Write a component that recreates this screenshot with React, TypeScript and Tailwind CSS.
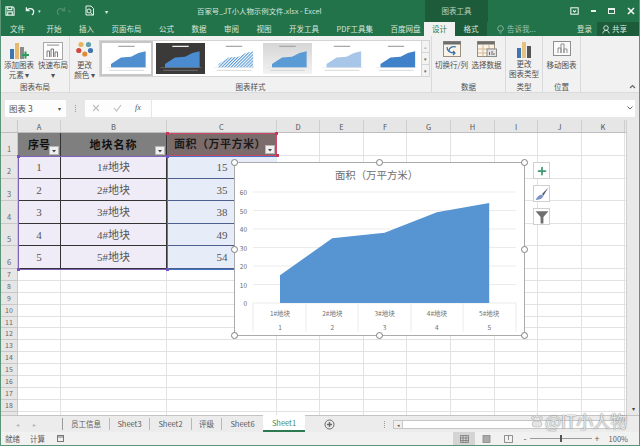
import { Plus } from "lucide-react";

const ui = "font-['Noto_Sans_CJK_SC','Noto_Sans',sans-serif]";
const cellFont = "font-['Liberation_Serif','Noto_Sans_CJK_SC',serif]";

const tabs = ["开始", "插入", "页面布局", "公式", "数据", "审阅", "视图", "开发工具", "PDF工具集", "百度网盘"];
const colWidths = [43, 106, 110, 43, 44, 43, 44, 44, 43, 44, 43, 44];
const colNames = ["A", "B", "C", "D", "E", "F", "G", "H", "I", "J", "K", ""];
const rows = [
  ["1", "1#地块", "15"],
  ["2", "2#地块", "35"],
  ["3", "3#地块", "38"],
  ["4", "4#地块", "49"],
  ["5", "5#地块", "54"],
];
const emptyRows = [7, 8, 9, 10, 11, 12, 13, 14, 15, 16, 17, 18, 19];
const values = [15, 35, 38, 49, 54];

// tiny area chart for the style gallery
function Thumb({ fill, dark, hatch }: { fill: string; dark?: boolean; hatch?: boolean }) {
  return (
    <svg viewBox="0 0 50 34" className="w-full h-full">
      {hatch && (
        <pattern id="hatch" width="2.4" height="2.4" patternUnits="userSpaceOnUse" patternTransform="rotate(45)">
          <rect width="1.2" height="2.4" fill="#5b9bd5" />
        </pattern>
      )}
      <rect x="16" y="3" width="18" height="1.4" fill={dark ? "#eeeeee" : "#a8a8a8"} />
      <path d="M8 27 V23 L19 16 L30 15 L38 11 L46 9 V27 Z" fill={hatch ? "url(#hatch)" : fill} />
      <rect x="3" y="27" width="45" height="0.4" fill={dark ? "#999999" : "#d8d8d8"} />
      <rect x="6" y="29.5" width="38" height="0.7" fill={dark ? "#888888" : "#c4c4c4"} />
    </svg>
  );
}

function Filter() {
  return (
    <span className="absolute right-[1px] bottom-[1px] w-[10px] h-[9px] bg-[#f0f0f0] border border-[#b5b5b5] flex items-center justify-center">
      <svg width="6" height="4" viewBox="0 0 6 4"><path d="M1 1 H5 L3 3.4 Z" fill="#444444" /></svg>
    </span>
  );
}

function Handle({ className }: { className: string }) {
  return <span className={`absolute w-[7px] h-[7px] rounded-full bg-white border border-[#7f7f7f] ${className}`} />;
}

function Corner({ className }: { className: string }) {
  return <span className={`absolute w-[3px] h-[3px] ${className}`} />;
}

function AreaChart() {
  const pts = values.map((v, i) => `${45 + i * 52.3},${140 - v * 1.85}`).join(" L");
  return (
    <svg viewBox="0 0 289 172" className="w-full h-full">
      <text x="141.5" y="16" textAnchor="middle" fontSize="10.4" fill="#6e6e6e" className={ui}>面积（万平方米）</text>
      {[60, 50, 40, 30, 20, 10, 0].map((t, i) => (
        <g key={t}>
          <line x1="18" x2="281" y1={29 + i * 18.5} y2={29 + i * 18.5} stroke="#e6e6e6" strokeWidth="0.8" />
          <text x="12" y={32 + i * 18.5} textAnchor="end" fontSize="6.5" fill="#6a6a6a" className={ui}>{t}</text>
        </g>
      ))}
      <path d={`M45,140 L${pts} L254.2,140 Z`} fill="#5694d2" />
      {[18, 71, 123, 176, 228, 281].map((x) => (
        <line key={x} x1={x} x2={x} y1="140" y2="169" stroke="#e6e6e6" strokeWidth="0.8" />
      ))}
      {values.map((_, i) => (
        <g key={i}>
          <text x={45 + i * 52.3} y="153" textAnchor="middle" fontSize="6.5" fill="#707070" className={ui}>{i + 1}#地块</text>
          <text x={45 + i * 52.3} y="167" textAnchor="middle" fontSize="6.5" fill="#707070" className={ui}>{i + 1}</text>
        </g>
      ))}
    </svg>
  );
}

export default function App() {
  return (
    <div className={`${ui} w-[640px] h-[446px] overflow-hidden relative flex flex-col bg-[#e9e9e9] text-[#444444] border-x border-b border-[#5b9478]`}>
      {/* title bar */}
      <div className="h-[22px] shrink-0 bg-[#22724a] text-[#d5e6dc] flex items-center relative">
        <div className="flex items-center pl-[4px] gap-[10px]">
          <svg width="10" height="10" viewBox="0 0 11 11" fill="none" stroke="#e8f2ec" strokeWidth="1.2">
            <path d="M1 1 H8.5 L10 2.5 V10 H1 Z M3 1 V4 H7.5 V1 M3 10 V6.5 H8 V10" />
          </svg>
          <svg width="11" height="10" viewBox="0 0 12 10" fill="none" stroke="#e8f2ec" strokeWidth="1.4">
            <path d="M1.5 1 V4.5 H5 M1.8 4.3 C3.5 1.5 9 1.5 9.5 5.5 C9.6 7 9 8.5 7.5 9.2" />
          </svg>
          <span className="text-[5px] -ml-[8px] -mt-[1px]">▾</span>
          <svg width="11" height="10" viewBox="0 0 12 10" fill="none" stroke="#4f8c6c" strokeWidth="1.4" className="ml-[4px]">
            <path d="M10.5 1 V4.5 H7 M10.2 4.3 C8.5 1.5 3 1.5 2.5 5.5 C2.4 7 3 8.5 4.5 9.2" />
          </svg>
          <span className="text-[5px] -ml-[8px] text-[#4f8c6c]">▾</span>
          <svg width="11" height="12" viewBox="0 0 11 12" fill="none" stroke="#e8f2ec" strokeWidth="1" className="ml-[3px]">
            <path d="M2 10 V1 H7 L9.5 3.5 V10 H2 Z" />
            <circle cx="5" cy="6" r="2" />
            <path d="M6.5 7.5 L9 10.5" />
          </svg>
          <span className="text-[6px] text-[#e8f2ec]">▾</span>
        </div>
        <span className="absolute left-[196px] top-[4px] text-[7.4px] leading-[13px] whitespace-nowrap">百家号_JT小人物示例文件.xlsx - Excel</span>
        <div className="absolute left-[424px] top-0 w-[63px] h-[22px] bg-[#1d5c3b] flex items-center justify-center text-[7.5px] text-[#b8d2c2]">图表工具</div>
        <div className="ml-auto flex items-center gap-[12px] pr-[4px]">
          <svg width="9" height="8" viewBox="0 0 9 8" fill="none" stroke="#e8f2ec" strokeWidth="1.1"><rect x="0.8" y="0.8" width="7.4" height="6.4" /><path d="M3 3.5 L4.5 5 L6 3.5" /></svg>
          <span className="w-[5px] h-[1.5px] bg-[#e8f2ec]" />
          <span className="w-[7px] h-[6px] border border-t-2 border-[#e8f2ec]" />
          <svg width="8" height="8" viewBox="0 0 8 8" stroke="#f2f7f4" strokeWidth="1.6"><path d="M1 1 L7 7 M7 1 L1 7" /></svg>
        </div>
      </div>

      {/* ribbon tabs */}
      <div className="h-[14px] shrink-0 bg-[#22724a] text-[#d8e8de] text-[7.5px] leading-[14px] flex relative whitespace-nowrap">
        <div className="flex gap-[17.5px] pl-[9px]">
          <span className="mr-[4px]">文件</span>
          {tabs.map((t) => <span key={t}>{t}</span>)}
        </div>
        <div className="absolute left-[423px] top-0 w-[31px] h-[14px] bg-[#f1f1f1] text-[#2d7a52] text-center">设计</div>
        <div className="absolute left-[454px] top-0 w-[32px] h-[14px] bg-[#1d5c3b] text-center">格式</div>
        <div className="absolute left-[496px] top-0 text-[#9fc2ae] flex items-center gap-[3px]">
          <svg width="7" height="9" viewBox="0 0 7 9" fill="none" stroke="#9fc2ae" strokeWidth="0.9"><path d="M2 6 C0 4.5 0.5 0.7 3.5 0.7 C6.5 0.7 7 4.5 5 6 Z M2.5 8 H4.5" /></svg>
          告诉我...
        </div>
        <div className="absolute left-[576px] top-0">登录</div>
        <div className="absolute left-[596px] top-0 w-[42px] h-[14px] bg-[#1d5c3b] pl-[5px] flex items-center gap-[2px]">
          <svg width="8" height="9" viewBox="0 0 8 9" fill="none" stroke="#d8e8de" strokeWidth="0.9"><circle cx="4" cy="3" r="2.3" /><path d="M0.8 8.5 C1.2 6.2 2.5 5.4 4 5.4 C5.5 5.4 6.8 6.2 7.2 8.5" /></svg>
          共享
        </div>
      </div>

      {/* ribbon */}
      <div className="h-[57px] shrink-0 bg-[#f1f1f1] flex text-[7.5px] leading-[9.5px] text-[#505050] border-b border-[#dcdcdc]">
        <div className="w-[69px] shrink-0 border-r border-[#dadada] flex flex-col">
          <div className="flex-1 flex pl-[3px] pt-[6px] gap-[4px]">
            <div className="w-[30px] flex flex-col items-center text-center">
              <svg width="20" height="18" viewBox="0 0 20 18">
                <rect x="1" y="7" width="4" height="10" fill="#3f76ad" />
                <rect x="6" y="1" width="4" height="16" fill="#e6b96f" />
                <rect x="11" y="5" width="4" height="12" fill="#8a8a8a" />
                <path d="M13 13 H20 M16.5 9.5 V16.5" stroke="#2f9a5e" strokeWidth="2" />
              </svg>
              <span>添加图表<br />元素 ▾</span>
            </div>
            <div className="w-[30px] flex flex-col items-center text-center">
              <svg width="20" height="18" viewBox="0 0 20 18" fill="none">
                <rect x="0.5" y="0.5" width="19" height="17" stroke="#a8a8a8" fill="#fdfdfd" />
                <rect x="4" y="2.5" width="12" height="1.2" fill="#a0a0a0" />
                <path d="M4 15 V9 H6.5 V15 M8 15 V7 H10.5 V15 M12 15 V10 H14.5 V15" stroke="#7a7a7a" />
              </svg>
              <span>快速布局<br />▾</span>
            </div>
          </div>
          <span className="text-center pb-[1px]">图表布局</span>
        </div>
        <div className="w-[362px] shrink-0 border-r border-[#dadada] flex flex-col">
          <div className="flex-1 flex pt-[4px]">
            <div className="w-[29px] shrink-0 flex flex-col items-center text-center pt-[1px]">
              <svg width="18" height="18" viewBox="0 0 18 18">
                <circle cx="5" cy="3.5" r="2.6" fill="#e8b45f" />
                <circle cx="12.5" cy="3.5" r="2.6" fill="#5fa3a8" />
                <circle cx="2.8" cy="9.5" r="2.6" fill="#d2483c" />
                <circle cx="14.5" cy="9.5" r="2.6" fill="#3f76ad" />
                <circle cx="8.8" cy="13" r="2.6" fill="#e08a38" />
              </svg>
              <span className="mt-[1px]">更改<br />颜色 ▾</span>
            </div>
            <div className="w-[331px] h-[37px] border border-[#d4d4d4] bg-white flex items-center">
              <div className="w-[53px] h-[35px] border-2 border-[#c6c6c6] shrink-0"><Thumb fill="#4f8fcf" /></div>
              <div className="w-[49px] h-[31px] ml-[3px] bg-[#3b3a39] shrink-0"><Thumb fill="#4a8ccf" dark /></div>
              <div className="w-[50px] h-[31px] ml-[4px] shrink-0"><Thumb fill="#5b9bd5" hatch /></div>
              <div className="w-[49px] h-[31px] ml-[4px] bg-gradient-to-b from-[#d6d6d6] to-[#f2f2f2] shrink-0"><Thumb fill="#5b9bd5" /></div>
              <div className="w-[50px] h-[31px] ml-[5px] shrink-0"><Thumb fill="#a8c6e8" /></div>
              <div className="w-[50px] h-[31px] ml-[4px] shrink-0"><Thumb fill="#3f82c9" /></div>
              <div className="ml-auto w-[10px] h-full border-l border-[#d4d4d4] flex flex-col text-[5px] leading-none text-[#666666] bg-[#f3f3f3]">
                <span className="flex-1 flex items-center justify-center border-b border-[#d4d4d4] text-[#bbbbbb]">▴</span>
                <span className="flex-1 flex items-center justify-center border-b border-[#d4d4d4]">▾</span>
                <span className="flex-1 flex items-center justify-center">▾</span>
              </div>
            </div>
          </div>
          <span className="text-center pb-[1px]">图表样式</span>
        </div>
        <div className="w-[74px] shrink-0 border-r border-[#dadada] flex flex-col">
          <div className="flex-1 flex pt-[5px] pl-[2px] text-center whitespace-nowrap">
            <div className="w-[35px] flex flex-col items-center">
              <svg width="18" height="16" viewBox="0 0 18 16" fill="none">
                <rect x="0.5" y="0.5" width="17" height="15" fill="#fbf3e6" stroke="#9a8f80" />
                <rect x="0.5" y="0.5" width="17" height="3" fill="#6d6d6d" />
                <path d="M4 6 C4 11 8 12 12 12 M10 10 L12 12 L10 14 M6 10 C6 6 10 5 13 6" stroke="#2f6fb0" strokeWidth="1.2" />
              </svg>
              <span className="mt-[3px] -mx-[2px]">切换行/列</span>
            </div>
            <div className="w-[35px] flex flex-col items-center">
              <svg width="20" height="16" viewBox="0 0 20 16" fill="none">
                <rect x="0.5" y="0.5" width="17" height="15" fill="#fbf3e6" stroke="#9a8f80" />
                <rect x="0.5" y="0.5" width="17" height="3" fill="#6d6d6d" />
                <path d="M6 4 V15 M12 4 V15 M1 8 H17 M1 12 H17" stroke="#d3b79a" />
                <rect x="10" y="8" width="9.5" height="7.5" fill="#e4e4e4" stroke="#8a8a8a" />
                <path d="M12.5 14 V11 M15 14 V10 M17 14 V12" stroke="#6a6a6a" />
              </svg>
              <span className="mt-[3px] -mx-[2px]">选择数据</span>
            </div>
          </div>
          <span className="text-center pb-[1px]">数据</span>
        </div>
        <div className="w-[37px] shrink-0 border-r border-[#dadada] flex flex-col items-center text-center">
          <div className="flex-1 pt-[5px] flex flex-col items-center">
            <svg width="16" height="17" viewBox="0 0 16 17">
              <rect x="1" y="7" width="4" height="10" fill="#3f76ad" />
              <rect x="6" y="1" width="4" height="16" fill="#e6c282" />
              <rect x="11" y="5" width="4" height="12" fill="#555555" />
            </svg>
            <span className="mt-[1px] whitespace-nowrap">更改<br />图表类型</span>
          </div>
          <span className="pb-[1px]">类型</span>
        </div>
        <div className="w-[38px] shrink-0 border-r border-[#dadada] flex flex-col items-center text-center">
          <div className="flex-1 pt-[5px] flex flex-col items-center whitespace-nowrap">
            <svg width="18" height="16" viewBox="0 0 18 16" fill="none" stroke="#8f8f8f">
              <rect x="0.5" y="0.5" width="17" height="14" fill="#fafafa" />
              <path d="M5 12 V7 H8 V12 M8 12 V3 H11 V12 M11 12 V8 H14 V12" />
            </svg>
            <span className="mt-[3px]">移动图表</span>
          </div>
          <span className="pb-[1px]">位置</span>
        </div>
        <div className="flex-1 flex items-end justify-end pr-[3px] pb-[3px] text-[#666666]">
          <svg width="7" height="5" viewBox="0 0 7 5" fill="none" stroke="#666666" strokeWidth="1.2"><path d="M1 4 L3.5 1.5 L6 4" /></svg>
        </div>
      </div>

      {/* formula bar */}
      <div className="h-[27px] shrink-0 bg-[#e7e7e7] flex items-center pt-[3px] pl-[4px] pr-[4px]">
        <div className="w-[61px] h-[17px] bg-[#fdfdfd] flex items-center justify-between pl-[4px] pr-[5px] text-[8.5px] text-[#555555]">
          <span>图表 3</span>
          <span className="text-[6px]">▾</span>
        </div>
        <span className="w-[1px] h-[7px] mx-[9px] border-l border-dotted border-[#999999]" />
        <div className="w-[66px] h-[17px] bg-[#fdfdfd] flex items-center gap-[13px] pl-[7px]">
          <svg width="8" height="8" viewBox="0 0 8 8" stroke="#bdbdbd" strokeWidth="1.1"><path d="M1 1 L7 7 M7 1 L1 7" /></svg>
          <svg width="9" height="8" viewBox="0 0 9 8" stroke="#bdbdbd" strokeWidth="1.1" fill="none"><path d="M1 4 L3.5 7 L8 1" /></svg>
          <span className="font-['Liberation_Serif',serif] italic text-[8px] text-[#555555]">fx</span>
        </div>
        <div className="flex-1 h-[17px] ml-[1px] bg-white flex items-center justify-end pr-[2px]">
          <svg width="6" height="4" viewBox="0 0 6 4" fill="none" stroke="#666666"><path d="M0.5 0.5 L3 3 L5.5 0.5" /></svg>
        </div>
      </div>

      {/* sheet */}
      <div className="flex-1 min-h-0 flex bg-white relative">
        <div className="flex-1 min-w-0 overflow-hidden">
          <div className="flex h-[13px] bg-[#e6e6e6] text-[7.5px] leading-[13px] text-[#555555] border-b border-[#bdbdbd]">
            <div className="w-[17px] shrink-0 border-r border-[#c8c8c8]" />
            {colWidths.map((w, i) => (
              <div key={i} style={{ width: w }} className="shrink-0 text-center border-r border-[#cfcfcf]">{colNames[i]}</div>
            ))}
          </div>
          {/* header row */}
          <div className="flex h-[23px]">
            <RowHead n={1} />
            <div className={`${cellFont} relative w-[43px] shrink-0 bg-[#7f7f7f] border-r border-[#333333] font-bold text-[11px] leading-[24px] text-center text-[#111111]`}>序号<Filter /></div>
            <div className={`${cellFont} relative w-[106px] shrink-0 bg-[#7f7f7f] border-r border-[#333333] font-bold text-[11px] leading-[24px] text-center text-[#111111] tracking-[1px]`}>地块名称<Filter /></div>
            <div className={`${cellFont} relative w-[110px] shrink-0 bg-[#7b6b6b] border-[1.5px] border-[#cf4a66] font-bold text-[11px] leading-[21px] pl-[6px] text-[#1b1b1b] whitespace-nowrap tracking-[0.5px]`}>面积（万平方米）<Filter /></div>
            <EmptyCells />
          </div>
          {rows.map((r, i) => (
            <div key={r[0]} className="flex h-[22.6px]">
              <RowHead n={i + 2} />
              <div className={`${cellFont} w-[43px] shrink-0 bg-[#efecf7] border-r border-b border-[#333333] text-[11px] leading-[22px] text-center text-[#555555]`}>{r[0]}</div>
              <div className={`${cellFont} w-[106px] shrink-0 bg-[#efecf7] border-r border-b border-[#333333] text-[11px] leading-[22px] text-center text-[#555555]`}>{r[1]}</div>
              <div className={`${cellFont} w-[110px] shrink-0 bg-[#e6edf8] border-b border-[#4e5e8c] text-[11px] leading-[22px] text-center text-[#555555]`}>{r[2]}</div>
              <EmptyCells />
            </div>
          ))}
          {emptyRows.map((n) => (
            <div key={n} className="flex h-[11.9px]">
              <div className="w-[17px] shrink-0 bg-[#e6e6e6] border-r border-b border-[#c8c8c8] text-[7px] leading-[11px] text-center text-[#666666]">{n}</div>
              {colWidths.map((w, i) => <div key={i} style={{ width: w }} className="shrink-0 border-r border-b border-[#e2e2e2]" />)}
            </div>
          ))}
        </div>
        <div className="w-[13px] shrink-0 bg-[#e9e9e9] border-l border-[#d0d0d0] flex flex-col justify-end items-center pb-[2px] text-[6px]">▾</div>

        {/* range outlines */}
        <div className="absolute left-[17px] top-[36px] w-[150px] h-[114px] border-[1.5px] border-[#8061c0] pointer-events-none">
          <Corner className="-left-[2px] -top-[2px] bg-[#7a4fc0]" />
          <Corner className="-right-[2px] -top-[2px] bg-[#7a4fc0]" />
          <Corner className="-left-[2px] -bottom-[2px] bg-[#7a4fc0]" />
          <Corner className="-right-[2px] -bottom-[2px] bg-[#7a4fc0]" />
        </div>
        <div className="absolute left-[167px] top-[36px] w-[110px] h-[114px] border-y-[1.5px] border-[#4472c4] pointer-events-none" />
        <Corner className="left-[165px] top-[12px] bg-[#c8385a]" />
        <Corner className="left-[274px] top-[12px] bg-[#c8385a]" />
        <Corner className="left-[275px] top-[34px] bg-[#c8385a]" />

        {/* chart object */}
        <div className="absolute left-[233px] top-[42px] w-[291px] h-[174px] bg-white border border-[#ababab]">
          <AreaChart />
          <Handle className="-left-[4px] -top-[4px]" />
          <Handle className="left-[141px] -top-[4px]" />
          <Handle className="-right-[4px] -top-[4px]" />
          <Handle className="-left-[4px] top-[83px]" />
          <Handle className="-right-[4px] top-[83px]" />
          <Handle className="-left-[4px] -bottom-[4px]" />
          <Handle className="left-[141px] -bottom-[4px]" />
          <Handle className="-right-[4px] -bottom-[4px]" />
        </div>
        <div className="absolute left-[532px] top-[42px] flex flex-col gap-[6px]">
          <div className="w-[17px] h-[17px] bg-white border border-[#d0d0d0] flex items-center justify-center">
            <Plus size={12} strokeWidth={3.5} color="#3f9a72" />
          </div>
          <div className="w-[17px] h-[17px] bg-white border border-[#d0d0d0] flex items-center justify-center">
            <svg width="14" height="14" viewBox="0 0 12 12">
              <path d="M11.5 0.5 L6 6 L7.2 7.5 Z" fill="#4f5f72" />
              <path d="M0.5 11 C2 8 4 6.3 6 6.6 L7.2 8 C6 10.3 3.5 11.3 0.5 11 Z" fill="#7d93c8" />
            </svg>
          </div>
          <div className="w-[17px] h-[17px] bg-white border border-[#d0d0d0] flex items-center justify-center">
            <svg width="14" height="14" viewBox="0 0 12 12"><path d="M0.5 1 H11.5 L7.2 6 V11.5 H4.8 V6 Z" fill="#6e6e6e" /></svg>
          </div>
        </div>
      </div>

      {/* sheet tabs */}
      <div className="h-[17px] shrink-0 bg-[#ececec] border-t border-[#c4c4c4] flex items-center text-[7.5px] text-[#5a5a5a] relative whitespace-nowrap">
        <span className="absolute left-[15px] text-[6px] text-[#b5b5b5]">◂</span>
        <span className="absolute left-[32px] text-[6px] text-[#b5b5b5]">▸</span>
        <div className="flex items-center ml-[61px] h-[13px] text-center">
          <span className="w-[47px] border-l border-[#9a9a9a]">员工信息</span>
          <span className="w-[40px] border-l border-[#b8b8b8]">Sheet3</span>
          <span className="w-[42px] border-l border-[#b8b8b8]">Sheet2</span>
          <span className="w-[30px] border-l border-[#b8b8b8]">评级</span>
          <span className="w-[42px] border-l border-[#b8b8b8]">Sheet6</span>
        </div>
        <div className="h-[17px] w-[42px] -mt-[1px] bg-white border-b-2 border-[#2d7a52] text-[#3d8a62] text-center leading-[15px]">Sheet1</div>
        <svg width="11" height="11" viewBox="0 0 11 11" fill="none" stroke="#666666" className="ml-[19px]">
          <circle cx="5.5" cy="5.5" r="4.5" /><path d="M5.5 3 V8 M3 5.5 H8" strokeWidth="1.4" />
        </svg>
        <span className="h-[7px] ml-[49px] border-l border-dotted border-[#999999]" />
        <div className="ml-[8px] w-[233px] h-[9px] flex bg-white border border-[#c6c6c6]">
          <span className="w-[9px] bg-[#f0f0f0] border-r border-[#c6c6c6] text-[5px] leading-[7px] text-center">◂</span>
        </div>
      </div>

      {/* status bar */}
      <div className="flex-none h-[13px] bg-[#f1f1f1] flex items-center text-[7.5px] text-[#5f5f5f] pl-[4px]">
        <span>就绪</span>
        <span className="ml-[10px]">计算</span>
        <svg width="7" height="7" viewBox="0 0 7 7" fill="none" stroke="#777777" className="ml-[12px]"><rect x="0.5" y="0.5" width="6" height="6" /><path d="M0.5 2 H6.5" /></svg>
        <div className="ml-auto flex items-center h-full">
          <div className="w-[22px] h-full bg-[#d4d4d4] flex items-center justify-center">
            <svg width="9" height="8" viewBox="0 0 9 8" fill="none" stroke="#777777" strokeWidth="0.8"><path d="M0.5 0.5 H8.5 V7.5 H0.5 Z M3 0.5 V7.5 M6 0.5 V7.5 M0.5 3 H8.5 M0.5 5.5 H8.5" /></svg>
          </div>
          <div className="w-[22px] flex justify-center">
            <svg width="9" height="8" viewBox="0 0 9 8" fill="#aaaaaa" stroke="#888888" strokeWidth="0.8"><rect x="1" y="0.5" width="7" height="7" /></svg>
          </div>
          <div className="w-[22px] flex justify-center">
            <svg width="9" height="8" viewBox="0 0 9 8" fill="none" stroke="#777777" strokeWidth="0.8"><path d="M0.5 0.5 H8.5 V7.5 H0.5 Z M4.5 0.5 V5" /></svg>
          </div>
          <span className="text-[9px] ml-[4px]">-</span>
          <div className="w-[62px] h-[1px] bg-[#9a9a9a] mx-[3px] flex justify-center items-center">
            <span className="w-[2px] h-[7px] bg-[#555555]" />
          </div>
          <span className="text-[9px]">+</span>
          <span className="ml-[9px] mr-[11px]">100%</span>
        </div>
      </div>

      {/* watermark */}
      <div className="absolute left-[529px] top-[411px] flex items-center text-[17px] leading-[20px] text-[#e6e6e6] whitespace-nowrap [text-shadow:0_0_1.5px_#555555] pointer-events-none">
        <svg width="14" height="14" viewBox="0 0 14 14" fill="#e4e4e4" stroke="#999999" strokeWidth="0.4"><circle cx="3" cy="4" r="1.6" /><circle cx="7" cy="2.5" r="1.6" /><circle cx="11" cy="4" r="1.6" /><rect x="2" y="7" width="10" height="6" rx="3" /></svg>
        <span className="ml-[1px]">@IT小人物</span>
      </div>
    </div>
  );
}

function RowHead({ n }: { n: number }) {
  return (
    <div className="w-[17px] shrink-0 bg-[#e6e6e6] border-r border-b border-[#c8c8c8] text-[7.5px] text-center text-[#666666] flex items-end justify-center pb-[1px]">{n}</div>
  );
}

function EmptyCells() {
  return (
    <>
      {colWidths.slice(3).map((w, i) => <div key={i} style={{ width: w }} className="shrink-0 border-r border-b border-[#e2e2e2]" />)}
    </>
  );
}
